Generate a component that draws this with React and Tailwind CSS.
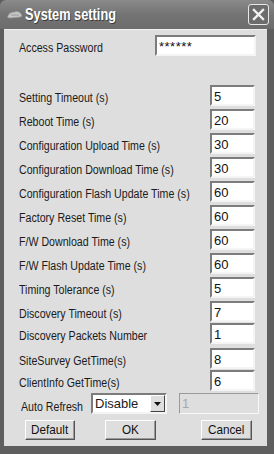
import React from 'react';

// [label, value, row height]
const rows = [
  ['Setting Timeout (s)', '5', 24],
  ['Reboot Time (s)', '20', 24],
  ['Configuration Upload Time (s)', '30', 24],
  ['Configuration Download Time (s)', '30', 24],
  ['Configuration Flash Update Time (s)', '60', 24],
  ['Factory Reset Time (s)', '60', 24],
  ['F/W Download Time (s)', '60', 24],
  ['F/W Flash Update Time (s)', '60', 24],
  ['Timing Tolerance (s)', '5', 24],
  ['Discovery Timeout (s)', '7', 22],
  ['Discovery Packets Number', '1', 25],
  ['SiteSurvey GetTime(s)', '8', 22],
  ['ClientInfo GetTime(s)', '6', 23],
];

const rowH = { 22: 'h-[22px]', 23: 'h-[23px]', 24: 'h-[24px]', 25: 'h-[25px]' };

const Field = ({ value, className }) => (
  <div
    className={`shrink-0 h-[21px] bg-white border-2 border-t-[#7c7c7c] border-l-[#7c7c7c] border-r-[#f4f4f4] border-b-[#f4f4f4] pl-[2px] text-[13px] leading-[19px] text-[#111] ${className}`}
  >
    {value}
  </div>
);

const Label = ({ children }) => (
  <div className="flex-1 min-w-0">
    <span className="inline-block whitespace-nowrap leading-[17px] text-[12.5px] scale-x-[0.85] origin-left">{children}</span>
  </div>
);

const Button = ({ children, className }) => (
  <div
    className={`h-[20px] flex items-center justify-center border border-t-white border-l-white border-r-[#555] border-b-[#555] shadow-[inset_-1px_-1px_0_#999] text-[13px] text-[#111] ${className}`}
  >
    <span className="scale-x-[0.9]">{children}</span>
  </div>
);

const App = () => {
  return (
    <div className="w-[274px] h-[454px] flex flex-col bg-[#5e5e5e] font-['Liberation_Sans',Arial,sans-serif] select-none">
      {/* Title bar */}
      <div className="h-[29px] flex items-center bg-gradient-to-b from-[#8a8a8a] via-[#747474] to-[#6c6c6c] pl-[7px] pr-[5px] rounded-t-[6px]">
        <svg width="16" height="10" viewBox="0 0 16 10" className="mr-[2px] shrink-0">
          <path d="M1 6 C2 3 5 2 8 2 C10 1 13 2 14 4 C15 5 15 7 13 7 L3 8 C1 8 0 7 1 6 Z" fill="#c8c8c8" stroke="#9a9a9a" strokeWidth="0.8" />
          <path d="M4 5 L12 5" stroke="#8a8a8a" strokeWidth="0.8" />
        </svg>
        <div className="flex-1 min-w-0">
          <span className="inline-block whitespace-nowrap text-white font-bold text-[16px] [text-shadow:1px_1px_0_#3a3a3a] scale-x-[0.8] origin-left">
            System setting
          </span>
        </div>
        <div className="shrink-0 w-[21px] h-[21px] border border-[#e8e8e8] rounded-[3px] bg-[#6c6c6c] flex items-center justify-center">
          <svg width="13" height="13" viewBox="0 0 13 13">
            <path d="M2 2 L11 11 M11 2 L2 11" stroke="#f2f2f2" strokeWidth="2.4" strokeLinecap="square" />
          </svg>
        </div>
      </div>

      {/* Body */}
      <div className="flex-1 ml-[4px] mr-[7px] mb-[8px] bg-[#dedede] border-t border-[#f0f0f0] text-[#1a1a1a]">
        <div className="flex items-start pl-[15px] pr-[11px] mt-[5px] h-[21px]">
          <Label>Access Password</Label>
          <Field value="******" className="w-[101px] text-[9px] leading-[12px] tracking-[0.5px]" />
        </div>

        <div className="mt-[29px] flex flex-col">
          {rows.map(([label, value, h]) => (
            <div key={label} className={`flex items-start pl-[15px] pr-[12px] ${rowH[h]}`}>
              <Label>{label}</Label>
              <Field value={value} className="w-[45px]" />
            </div>
          ))}
        </div>

        <div className="flex items-start h-[21px] pl-[17px]">
          <div className="w-[70px] flex pt-[1px]">
            <Label>Auto Refresh</Label>
          </div>
          <div className="w-[76px] h-[21px] bg-white border-2 border-t-[#7c7c7c] border-l-[#7c7c7c] border-r-[#f4f4f4] border-b-[#f4f4f4] flex items-center">
            <span className="flex-1 pl-[2px] text-[13px]">Disable</span>
            <div className="w-[15px] h-[17px] bg-[#dedede] border border-t-white border-l-white border-r-[#444] border-b-[#444] flex items-center justify-center">
              <svg width="7" height="4" viewBox="0 0 7 4"><path d="M0 0 L7 0 L3.5 4 Z" fill="#111" /></svg>
            </div>
          </div>
          <div className="ml-[12px] w-[80px] h-[21px] border border-t-[#9a9a9a] border-l-[#9a9a9a] border-r-[#f8f8f8] border-b-[#f8f8f8] bg-[#dedede] text-[#a8a8a8] text-[13px] pl-[2px] leading-[19px]">
            1
          </div>
        </div>

        <div className="flex items-center mt-[6px] pl-[21px]">
          <Button className="w-[50px]">Default</Button>
          <Button className="w-[51px] ml-[30px]">OK</Button>
          <Button className="w-[51px] ml-[45px]">Cancel</Button>
        </div>
      </div>
    </div>
  );
};

export default App;
